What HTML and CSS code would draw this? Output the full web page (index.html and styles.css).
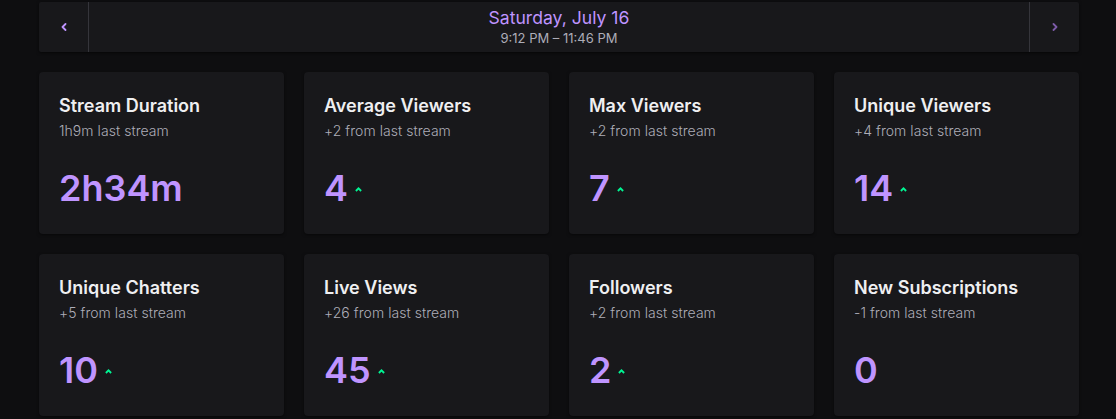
FILE: index.html
```html
<!DOCTYPE html>
<html>
<head>
<meta charset="utf-8">
<link rel="stylesheet" href="styles.css">
</head>
<body>
<div class="page">
  <div class="datebar">
    <button class="nav nav-prev" aria-label="Previous">
      <svg width="6" height="8" viewBox="0 0 6 8"><path d="M4.5 1 L1.5 4 L4.5 7" fill="none" stroke="currentColor" stroke-width="1.8" stroke-linecap="round" stroke-linejoin="round"/></svg>
    </button>
    <div class="date">
      <div class="date-title">Saturday, July 16</div>
      <div class="date-time">9:12 PM – 11:46 PM</div>
    </div>
    <button class="nav nav-next" aria-label="Next">
      <svg width="6" height="8" viewBox="0 0 6 8"><path d="M1.5 1 L4.5 4 L1.5 7" fill="none" stroke="currentColor" stroke-width="1.8" stroke-linecap="round" stroke-linejoin="round"/></svg>
    </button>
  </div>
  <div class="grid">
    <div class="card">
      <div class="title">Stream Duration</div>
      <div class="sub">1h9m last stream</div>
      <div class="value"><span>2h34m</span></div>
    </div>
    <div class="card">
      <div class="title">Average Viewers</div>
      <div class="sub">+2 from last stream</div>
      <div class="value"><span>4</span><svg class="up" width="7" height="5" viewBox="0 0 7 5"><path d="M0.9 4 L3.5 1.4 L6.1 4" fill="none" stroke="currentColor" stroke-width="1.9"/></svg></div>
    </div>
    <div class="card">
      <div class="title">Max Viewers</div>
      <div class="sub">+2 from last stream</div>
      <div class="value"><span>7</span><svg class="up" width="7" height="5" viewBox="0 0 7 5"><path d="M0.9 4 L3.5 1.4 L6.1 4" fill="none" stroke="currentColor" stroke-width="1.9"/></svg></div>
    </div>
    <div class="card">
      <div class="title">Unique Viewers</div>
      <div class="sub">+4 from last stream</div>
      <div class="value"><span>14</span><svg class="up" width="7" height="5" viewBox="0 0 7 5"><path d="M0.9 4 L3.5 1.4 L6.1 4" fill="none" stroke="currentColor" stroke-width="1.9"/></svg></div>
    </div>
    <div class="card">
      <div class="title">Unique Chatters</div>
      <div class="sub">+5 from last stream</div>
      <div class="value"><span>10</span><svg class="up" width="7" height="5" viewBox="0 0 7 5"><path d="M0.9 4 L3.5 1.4 L6.1 4" fill="none" stroke="currentColor" stroke-width="1.9"/></svg></div>
    </div>
    <div class="card">
      <div class="title">Live Views</div>
      <div class="sub">+26 from last stream</div>
      <div class="value"><span>45</span><svg class="up" width="7" height="5" viewBox="0 0 7 5"><path d="M0.9 4 L3.5 1.4 L6.1 4" fill="none" stroke="currentColor" stroke-width="1.9"/></svg></div>
    </div>
    <div class="card">
      <div class="title">Followers</div>
      <div class="sub">+2 from last stream</div>
      <div class="value"><span>2</span><svg class="up" width="7" height="5" viewBox="0 0 7 5"><path d="M0.9 4 L3.5 1.4 L6.1 4" fill="none" stroke="currentColor" stroke-width="1.9"/></svg></div>
    </div>
    <div class="card">
      <div class="title">New Subscriptions</div>
      <div class="sub">-1 from last stream</div>
      <div class="value"><span>0</span></div>
    </div>
  </div>
</div>
</body>
</html>
```
FILE: styles.css
```css
* { box-sizing: border-box; }
html, body { margin: 0; padding: 0; }
body {
  background: #0e0e10;
  font-family: Inter, "Noto Sans", sans-serif;
  color: #efeff1;
  height: 419px;
  overflow: hidden;
}
.page {
  width: 1040px;
  margin-left: 39px;
  padding-top: 2px;
}
.datebar {
  display: flex;
  align-items: stretch;
  height: 50px;
  background: #18181b;
  border-radius: 2px;
  box-shadow: 0 1px 3px rgba(0,0,0,0.6);
}
.nav {
  width: 50px;
  border: 0;
  background: transparent;
  padding: 0;
  display: flex;
  align-items: center;
  justify-content: center;
  color: #bf94ff;
}
.nav-prev { border-right: 1px solid #35353b; }
.nav-next { border-left: 1px solid #35353b; color: #7d5ba8; }
.date {
  flex: 1;
  display: flex;
  flex-direction: column;
  align-items: center;
  justify-content: center;
  padding-bottom: 1px;
}
.date-title {
  color: #bf94ff;
  font-size: 17.6px;
  line-height: 21px;
}
.date-time {
  color: #adadb8;
  font-size: 13px;
  line-height: 17px;
  margin-top: 2px;
}
.grid {
  margin-top: 20px;
  display: grid;
  grid-template-columns: repeat(4, 1fr);
  gap: 20px;
}
.card {
  background: #18181b;
  border-radius: 4px;
  height: 162px;
  padding: 22px 20px 20px;
  box-shadow: 0 1px 3px rgba(0,0,0,0.5);
}
.title {
  font-size: 18px;
  line-height: 24px;
  font-weight: 600;
  color: #efeff1;
}
.sub {
  font-size: 14px;
  line-height: 20px;
  font-weight: 300;
  letter-spacing: 0.05px;
  color: #adadb8;
  margin-top: 3px;
}
.value {
  margin-top: 25px;
  display: flex;
  align-items: center;
  gap: 7px;
  color: #bf94ff;
  font-size: 36px;
  font-weight: 600;
  line-height: 44px;
}
.up {
  color: #00f593;
  margin-top: 3px;
}
```
